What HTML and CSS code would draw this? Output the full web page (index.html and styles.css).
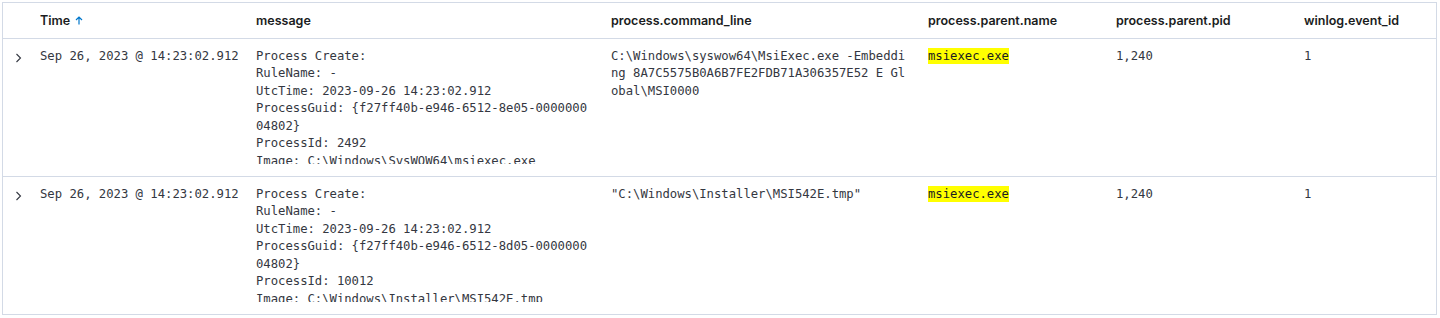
FILE: index.html
```html
<!DOCTYPE html>
<html lang="en">
<head>
    <meta charset="UTF-8">
    <title>Discover - documents</title>
    <link rel="stylesheet" href="styles.css">
</head>
<body>
    <div class="doc-table-wrap">
        <table class="doc-table">
            <colgroup>
                <col class="col-toggle">
                <col class="col-time">
                <col class="col-message">
                <col class="col-cmd">
                <col class="col-pname">
                <col class="col-ppid">
                <col class="col-event">
            </colgroup>
            <thead>
                <tr>
                    <th></th>
                    <th>Time <span class="sort-arrow">
                        <svg width="8" height="9" viewBox="0 0 8 9"><path d="M4 8.5V1M1 4l3-3 3 3" fill="none" stroke="#0077cc" stroke-width="1.2"/></svg>
                    </span></th>
                    <th>message</th>
                    <th>process.command_line</th>
                    <th>process.parent.name</th>
                    <th>process.parent.pid</th>
                    <th>winlog.event_id</th>
                </tr>
            </thead>
            <tbody>
                <tr>
                    <td class="toggle">
                        <svg width="7" height="10" viewBox="0 0 7 10"><path d="M1.5 1l4 4-4 4" fill="none" stroke="#343741" stroke-width="1.1"/></svg>
                    </td>
                    <td>Sep 26, 2023 @ 14:23:02.912</td>
                    <td><div class="cell-clip msg-clip">Process Create:
RuleName: -
UtcTime: 2023-09-26 14:23:02.912
ProcessGuid: {f27ff40b-e946-6512-8e05-000000004802}
ProcessId: 2492
Image: C:\Windows\SysWOW64\msiexec.exe
FileVersion: 5.0.19041.3570</div></td>
                    <td><div class="cell-clip">C:\Windows\syswow64\MsiExec.exe -Embedding 8A7C5575B0A6B7FE2FDB71A306357E52 E Global\MSI0000</div></td>
                    <td><mark>msiexec.exe</mark></td>
                    <td>1,240</td>
                    <td>1</td>
                </tr>
                <tr>
                    <td class="toggle">
                        <svg width="7" height="10" viewBox="0 0 7 10"><path d="M1.5 1l4 4-4 4" fill="none" stroke="#343741" stroke-width="1.1"/></svg>
                    </td>
                    <td>Sep 26, 2023 @ 14:23:02.912</td>
                    <td><div class="cell-clip msg-clip">Process Create:
RuleName: -
UtcTime: 2023-09-26 14:23:02.912
ProcessGuid: {f27ff40b-e946-6512-8d05-000000004802}
ProcessId: 10012
Image: C:\Windows\Installer\MSI542E.tmp
FileVersion: -</div></td>
                    <td><div class="cell-clip">"C:\Windows\Installer\MSI542E.tmp"</div></td>
                    <td><mark>msiexec.exe</mark></td>
                    <td>1,240</td>
                    <td>1</td>
                </tr>
            </tbody>
        </table>
    </div>
</body>
</html>
```
FILE: styles.css
```css
* {
    margin: 0;
    padding: 0;
    box-sizing: border-box;
}

body {
    background: #ffffff;
    font-family: 'Inter', 'Liberation Sans', sans-serif;
    color: #343741;
    height: 318px;
    overflow: hidden;
}

.doc-table-wrap {
    margin: 2px 3px 0 2px;
    border-left: 1px solid #d3dae6;
    border-right: 1px solid #d3dae6;
    border-top: 1px solid #d3dae6;
}

.doc-table {
    width: 100%;
    border-collapse: collapse;
    table-layout: fixed;
}

.col-toggle { width: 29px; }
.col-time { width: 216px; }
.col-message { width: 355px; }
.col-cmd { width: 317px; }
.col-pname { width: 188px; }
.col-ppid { width: 188px; }
.col-event { width: auto; }

/* header row */
.doc-table th {
    height: 35px;
    padding: 0 8px;
    text-align: left;
    font-size: 12.5px;
    font-weight: 600;
    color: #1a1c21;
    border-bottom: 1px solid #d3dae6;
    white-space: nowrap;
}

.sort-arrow {
    display: inline-block;
    margin-left: 2px;
    vertical-align: 0;
}

/* document rows */
.doc-table td {
    height: 138px;
    padding: 9px 8px 12px;
    vertical-align: top;
    font-family: 'DejaVu Sans Mono', 'Liberation Mono', monospace;
    font-size: 12.25px;
    line-height: 17.5px;
    color: #343741;
    border-bottom: 1px solid #d3dae6;
    letter-spacing: -0.02px;
}

.doc-table td.toggle {
    padding: 12px 0 0 12px;
}

.cell-clip {
    max-height: 116px;
    overflow: hidden;
    white-space: pre-wrap;
    word-break: break-all;
}

/* message text wraps a little short of the column edge */
.msg-clip {
    padding-right: 6px;
}

mark {
    background: #ffff00;
    color: #1a1c21;
    padding: 1px 0;
}
```
